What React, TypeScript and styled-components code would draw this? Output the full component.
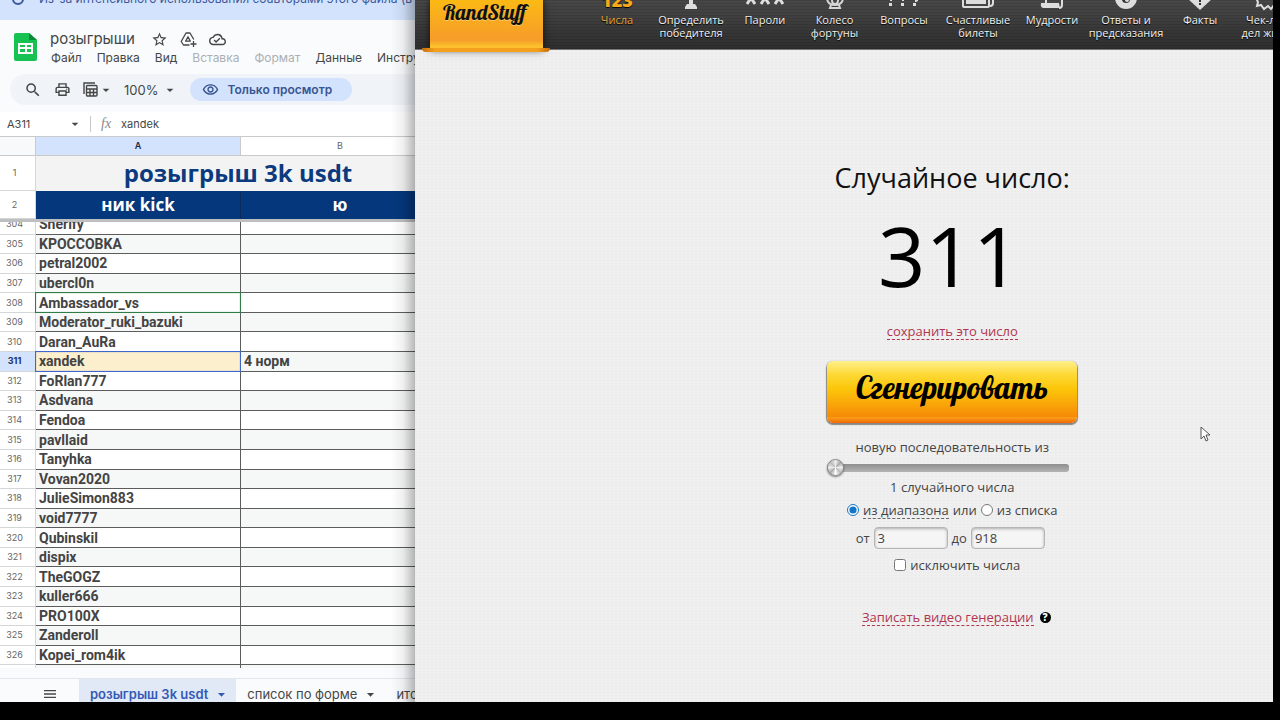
import React from 'react';
import styled, { createGlobalStyle, css } from 'styled-components';
import {
  MdArrowDropDown,
  MdMenu,
  MdOutlineCloudDone,
  MdOutlinePrint,
  MdOutlineRemoveRedEye,
  MdSearch,
  MdStarBorder,
} from 'react-icons/md';

const GlobalStyle = createGlobalStyle`
  * { box-sizing: border-box; }
  body { margin: 0; background: #000; }
  button, input { font: inherit; color: inherit; margin: 0; }
  button { border: 0; padding: 0; background: none; cursor: pointer; white-space: nowrap; }
`;

const sheetFont = `Inter, "Liberation Sans", sans-serif`;
const siteFont = `"Open Sans", "Noto Sans", sans-serif`;
const scriptFont = `Lobster, "Liberation Serif", serif`;

const Desktop = styled.div`
  display: grid;
  grid-template-columns: minmax(0, 415fr) minmax(0, 858fr);
  min-height: 100vh;
  padding: 0 7px 18px 0;
  background: #000;
`;

/* ---------- Spreadsheet ---------- */

const SheetPane = styled.section`
  position: relative;
  display: flex;
  flex-direction: column;
  overflow: hidden;
  background: #f9fbfd;
  color: #444746;
  font-family: ${sheetFont};
  &::after {
    content: '';
    position: absolute;
    inset: 0 0 0 auto;
    width: 24px;
    background: linear-gradient(to right, rgba(0, 0, 0, 0), rgba(0, 0, 0, 0.06) 50%, rgba(0, 0, 0, 0.28));
    pointer-events: none;
  }
`;

const Notice = styled.div`
  display: flex;
  align-items: flex-end;
  gap: 14px;
  height: 20px;
  padding: 0 0 14px 12px;
  overflow: hidden;
  background: #d3e3fd;
  color: #3c5a9a;
  font-size: 12px;
  line-height: 14px;
  white-space: nowrap;
  svg { flex: none; }
`;

const DocHeader = styled.header`
  display: flex;
  gap: 13px;
  height: 54px;
  padding: 9px 0 0 14px;
`;

const SheetsLogo = styled.svg`
  flex: none;
  width: 23px;
  height: 28px;
  margin-top: 4px;
`;

const DocInfo = styled.div`
  display: flex;
  flex-direction: column;
  min-width: 0;
`;

const TitleRow = styled.div`
  display: flex;
  align-items: center;
  height: 20px;
  gap: 12px;
`;

const DocTitle = styled.h1`
  margin: 0 4px 0 0;
  font-size: 15px;
  font-weight: 400;
  line-height: 20px;
`;

const IconButton = styled.button`
  display: flex;
  align-items: center;
  justify-content: center;
  color: #444746;
`;

const MenuBar = styled.nav`
  display: flex;
  gap: 15px;
  padding: 0 0 0 1px;
`;

const MenuItem = styled.button<{ $off?: boolean }>`
  font-size: 12px;
  line-height: 18px;
  color: ${(p) => (p.$off ? '#adb0b3' : '#444746')};
`;

const Toolbar = styled.div`
  display: flex;
  align-items: center;
  height: 31px;
  margin-left: 10px;
  padding-left: 14px;
  border-radius: 16px 0 0 16px;
  background: #f0f4f9;
`;

const ToolGroup = styled.div`
  display: flex;
  align-items: center;
  margin-left: 12px;
`;

const ZoomButton = styled(IconButton)`
  gap: 4px;
  margin-left: 10px;
  font-size: 13px;
`;

const ViewOnly = styled.button`
  display: flex;
  align-items: center;
  gap: 8px;
  height: 23px;
  margin: 0 0 1px 12px;
  padding: 0 20px 0 12px;
  border-radius: 12px;
  background: #d3e3fd;
  color: #3a5590;
  font-size: 12px;
  font-weight: 600;
`;

const FormulaBar = styled.div`
  display: flex;
  align-items: center;
  height: 24px;
  margin-top: 7px;
  background: #fff;
  font-size: 11px;
`;

const NameBox = styled.input`
  width: 67px;
  padding: 0 0 0 7px;
  border: 0;
  background: none;
  outline: 0;
`;

const FormulaMark = styled.span`
  margin-left: 7px;
  padding-left: 10px;
  border-left: 1px solid #c7c7c7;
  color: #888;
  font: italic 14px "Liberation Serif", serif;
`;

const FormulaInput = styled.input`
  flex: 1;
  min-width: 0;
  margin-left: 10px;
  padding: 0;
  border: 0;
  background: none;
  outline: 0;
`;

const GridTable = styled.table`
  flex: none;
  width: 440px;
  table-layout: fixed;
  border-collapse: separate;
  border-spacing: 0;
  background: #fff;
`;

const Corner = styled.th`
  height: 20px;
  padding: 0;
  border: solid #c8cacc;
  border-width: 1px 1px 1px 0;
  background: #f8f9fa;
`;

const ColumnHead = styled.th<{ $active?: boolean }>`
  height: 20px;
  padding: 0 0 2px;
  border: solid #c8cacc;
  border-width: 1px 1px 1px 0;
  background: ${(p) => (p.$active ? '#d3e3fd' : '#fff')};
  color: ${(p) => (p.$active ? '#1f2a44' : '#666')};
  font-size: 9px;
  font-weight: ${(p) => (p.$active ? 600 : 400)};
`;

const RowHead = styled.th<{ $active?: boolean }>`
  padding: 0 6px 0 0;
  border: solid #d4d6d8;
  border-width: 0 1px 1px 0;
  background: ${(p) => (p.$active ? '#d3e3fd' : '#fff')};
  color: ${(p) => (p.$active ? '#1d3468' : '#666')};
  font-size: 9px;
  font-weight: ${(p) => (p.$active ? 700 : 400)};
  line-height: 12px;
`;

const BannerCell = styled.td`
  height: 35px;
  padding: 0 0 2px;
  background: #f3f3f3;
  color: #0b3a7e;
  font: 700 24px/30px "Open Sans", sans-serif;
  text-align: center;
`;

const FieldCell = styled.td`
  height: 28px;
  padding: 0;
  border-right: 1px solid #0a2a5c;
  background: #04377c;
  color: #fff;
  font: 700 17px/22px "Open Sans", sans-serif;
  text-align: center;
`;

const FreezeLine = styled.div`
  flex: none;
  height: 3px;
  background: #bdbfc1;
`;

const ScrollArea = styled.div`
  flex: 1 1 446px;
  min-height: 0;
  overflow: hidden;
`;

const BodyTable = styled(GridTable)`
  height: 470px;
  margin-top: -7px;
  tr:nth-child(even) td { background: #f6f8f8; }
`;

const marks = { selected: '#3f66cc', other: '#2f7d45' };

const Cell = styled.td<{ $mark?: keyof typeof marks }>`
  position: relative;
  height: 19px;
  padding: 0 0 0 3px;
  border: solid #5c5c5c;
  border-width: 0 1px 1px 0;
  color: #444;
  font: 700 14px/16px Roboto, sans-serif;
  ${(p) => p.$mark && css`
    &::before {
      content: '';
      position: absolute;
      z-index: 1;
      inset: -1px;
      border: 1px solid ${marks[p.$mark]};
      box-shadow: inset 0 0 1px ${marks[p.$mark]};
    }
  `}
  tr &&& { ${(p) => p.$mark === 'selected' && 'background: #fcefcd;'} }
`;

const TabBar = styled.div`
  display: flex;
  flex: none;
  height: 24px;
  margin-top: 10px;
  border-top: 1px solid #e3e6ea;
  padding-left: 42px;
  overflow: hidden;
  ${IconButton} { margin: 7px 21px 0 0; height: 16px; }
`;

const SheetTab = styled.button<{ $active?: boolean }>`
  display: flex;
  align-items: flex-start;
  gap: 5px;
  padding: 7px 6px 0 11px;
  background: ${(p) => (p.$active ? '#e1e9f7' : 'transparent')};
  color: ${(p) => (p.$active ? '#3459b5' : '#444746')};
  font-size: 13px;
  font-weight: ${(p) => (p.$active ? 600 : 400)};
  line-height: 16px;
`;

/* ---------- RandStuff site ---------- */

const SitePane = styled.section`
  overflow: hidden;
  background-color: #eee;
  background-image: linear-gradient(45deg, rgba(0, 0, 0, 0.02) 25%, transparent 25% 60%, rgba(255, 255, 255, 0.15) 60%);
  background-size: 4px 3px;
  color: #444;
  font-family: ${siteFont};
`;

const Page = styled.div`
  width: 125%;
`;

const SiteHeader = styled.header`
  display: flex;
  height: 50px;
  padding-left: 15px;
  border-bottom: 1px solid #777;
  background: repeating-linear-gradient(to bottom, rgba(0, 0, 0, 0.1) 0 1px, transparent 1px 3px),
    linear-gradient(#484848, #2e2e2e);
`;

const Brand = styled.a`
  position: relative;
  flex: none;
  width: 113px;
  height: 50px;
  padding-right: 4px;
  background: linear-gradient(#fbb914, #f69c2a 80%, #fbc02c 92%);
  color: #111;
  font: 400 21px/25px ${scriptFont};
  text-align: center;
  text-decoration: none;
  text-shadow: 0 1px 0 rgba(255, 255, 255, 0.35);
  box-shadow: 0 0 8px rgba(0, 0, 0, 0.7);
  &::after {
    content: '';
    position: absolute;
    left: -8px;
    right: -7px;
    bottom: -2px;
    height: 4px;
    border-radius: 0 0 8px 8px;
    background: linear-gradient(to right, #c96a08, #f3a01c 10% 90%, #c96a08);
  }
`;

const SiteNav = styled.nav`
  display: flex;
  margin-left: 37px;
`;

const NavLink = styled.a<{ $current?: boolean; $narrow?: boolean }>`
  display: flex;
  flex: none;
  flex-direction: column;
  align-items: center;
  width: ${(p) => (p.$narrow ? 65 : 74)}px;
  color: ${(p) => (p.$current ? '#e0a53a' : '#f0f0f0')};
  font-size: 11px;
  font-weight: 500;
  line-height: 13px;
  text-align: center;
  text-decoration: none;
  white-space: nowrap;
  text-shadow: 0 1px 1px #000;
  svg { display: block; flex: none; width: 48px; height: 13px; overflow: hidden; }
`;

const NumbersGlyph = styled.span`
  display: flex;
  align-items: flex-end;
  height: 13px;
  padding-bottom: 3px;
  overflow: hidden;
  color: #f9a81c;
  font: 800 18px/20px ${siteFont};
`;

const Generator = styled.main`
  display: flex;
  flex-direction: column;
  align-items: center;
  padding: 110px 0 0 2px;
  font-size: 13px;
  line-height: 18px;
`;

const Heading = styled.h2`
  margin: 0;
  color: #111;
  font-size: 27px;
  font-weight: 400;
  line-height: 36px;
`;

const Result = styled.output`
  margin: 0 6px 9px 0;
  color: #000;
  font-size: 83px;
  line-height: 118px;
`;

const DashedLink = styled.a`
  border-bottom: 1px dashed currentColor;
  color: #b03650;
  line-height: 16px;
  text-decoration: none;
`;

const GenerateButton = styled.button`
  width: 250px;
  height: 62px;
  margin: 21px 0 15px;
  padding-bottom: 8px;
  border-radius: 6px;
  background: linear-gradient(#fff08c, #fdd835 22%, #fcc60a 45%, #f99a08 78%, #f58a06 90%, #fb9d18 91%, #f06a08);
  box-shadow: 0 1px 1px 1px #8a8580;
  color: #000;
  font: 400 31px/40px ${scriptFont};
`;

const Slider = styled.input`
  width: 242px;
  height: 18px;
  margin: 3px 8px 1px 0;
  appearance: none;
  background: none;
  &::-webkit-slider-runnable-track {
    height: 8px;
    border-radius: 3px;
    background: linear-gradient(#8e8e8e, #b4b4b4);
  }
  &::-webkit-slider-thumb {
    appearance: none;
    width: 17px;
    height: 17px;
    margin-top: -5px;
    border: 1px solid #888;
    border-radius: 50%;
    background: conic-gradient(#eee, #aaa, #eee, #bbb, #fff, #aaa, #eee, #bbb, #eee);
    box-shadow: 0 1px 2px rgba(0, 0, 0, 0.5);
  }
`;

const FieldRow = styled.div<{ $indent?: boolean }>`
  display: flex;
  align-items: center;
  gap: 4px;
  margin-top: ${(p) => (p.$indent ? 8 : 5)}px;
  padding-left: ${(p) => (p.$indent ? 10 : 0)}px;
`;

const RangeRow = styled(FieldRow)`
  margin-top: 8px;
  padding-right: 4px;
`;

const Choice = styled.label`
  display: flex;
  align-items: center;
  gap: 4px;
`;

const Tick = styled.input`
  width: 12px;
  height: 12px;
  accent-color: #1375c8;
`;

const ChoiceText = styled.span<{ $dashed?: boolean }>`
  border-bottom: ${(p) => (p.$dashed ? '1px dashed #666' : 0)};
  line-height: 16px;
`;

const NumberField = styled.input`
  width: 74px;
  height: 22px;
  padding: 0 3px;
  border: 1px solid #b5b5b5;
  border-radius: 4px;
  background: #f5f5f5;
  box-shadow: inset 0 1px 3px rgba(0, 0, 0, 0.3);
`;

const VideoRow = styled.div`
  display: flex;
  align-items: center;
  gap: 6px;
  margin-top: 36px;
  padding-left: 8px;
`;

const HelpBadge = styled.button`
  width: 11px;
  height: 11px;
  border-radius: 50%;
  background: #000;
  color: #fff;
  font-size: 10px;
  font-weight: 800;
  line-height: 11px;
`;

const Pointer = styled.svg`
  position: fixed;
  left: 1200px;
  top: 426px;
  width: 12px;
  height: 17px;
`;

/* Only the lower edge of each navigation icon reaches into the visible header. */
const icons: Record<string, React.ReactNode> = {
  cup: <path d="M22 0h4v4h2l2 3v2H18V7l2-3h2z" />,
  stars: (
    <g stroke="#ddd" strokeWidth="3">
      <path d="M10-2L6 4M10-2l4 6M24-2l-4 6M24-2l4 6M38-2l-4 6M38-2l4 6" fill="none" />
    </g>
  ),
  wheel: (
    <g fill="none" stroke="#d5d5d5" strokeWidth="2">
      <path d="M16 -1c1 5 4 6 8 6s7-1 8-6M21 0c0 3 1 4 3 4s3-1 3-4" />
      <path d="M20 5l-1 3h10l-1-3" />
    </g>
  ),
  marks: <path d="M9 3h3v3H9zM21 3h3v3h-3zM33 3h3v3h-3zM10 0h2v1h-2zM22 0h2v1h-2zM35 0h3v1l-2 1h-1z" />,
  tickets: (
    <g fill="none" stroke="#ddd" strokeWidth="2">
      <path d="M9 -2v8q0 1 2 1h22q2 0 2-1v-8" />
      <path d="M36 6q3 0 3-3v-5" />
      <path d="M13 -2v5h18v-5z" fill="#ddd" />
    </g>
  ),
  scroll: (
    <g>
      <path d="M13 3h18l1 5H16q-4 0-3-5z" fill="#ddd" />
      <path d="M18 -1v4M34 -1v6q0 3-3 3" fill="none" stroke="#ddd" strokeWidth="2" />
    </g>
  ),
  eye: (
    <g>
      <circle cx="24" cy="-2" r="11" fill="#ddd" />
      <circle cx="24" cy="-1" r="4" fill="#333" />
      <circle cx="25" cy="0" r="2" fill="#ddd" />
    </g>
  ),
  sign: (
    <g>
      <path d="M11-2h26L24 10z" fill="#ddd" />
      <path d="M23-2h2v4h-2zM23 3h2v2h-2z" fill="#333" />
    </g>
  ),
  badge: <path d="M10 -2l2 4-1 4 4-1 3 4 4-3 3 3 3-4 4 1v-4" fill="none" stroke="#ddd" strokeWidth="2" />,
};

const navItems: { lines: string[]; icon?: string; narrow?: boolean }[] = [
  { lines: ['Числа'] },
  { lines: ['Определить', 'победителя'], icon: 'cup' },
  { lines: ['Пароли'], icon: 'stars' },
  { lines: ['Колесо', 'фортуны'], icon: 'wheel', narrow: true },
  { lines: ['Вопросы'], icon: 'marks' },
  { lines: ['Счастливые', 'билеты'], icon: 'tickets' },
  { lines: ['Мудрости'], icon: 'scroll' },
  { lines: ['Ответы и', 'предсказания'], icon: 'eye' },
  { lines: ['Факты'], icon: 'sign' },
  { lines: ['Чек-лист', 'дел жизни'], icon: 'badge', narrow: true },
];

const menuItems = [
  { text: 'Файл' },
  { text: 'Правка' },
  { text: 'Вид' },
  { text: 'Вставка', off: true },
  { text: 'Формат', off: true },
  { text: 'Данные' },
  { text: 'Инструменты' },
];

const names = [
  'Sherify', 'KPOCCOBKA', 'petral2002', 'ubercl0n', 'Ambassador_vs', 'Moderator_ruki_bazuki',
  'Daran_AuRa', 'xandek', 'FoRlan777', 'Asdvana', 'Fendoa', 'pavllaid', 'Tanyhka', 'Vovan2020',
  'JulieSimon883', 'void7777', 'Qubinskil', 'dispix', 'TheGOGZ', 'kuller666', 'PRO100X',
  'Zanderoll', 'Kopei_rom4ik', '',
];
const firstRow = 304;
const selectedRow = 311;
const otherUserRow = 308;

const HeadCol = styled.col`
  width: 36px;
`;
const NameCol = styled.col`
  width: 205px;
`;

const Columns = () => (
  <colgroup>
    <HeadCol />
    <NameCol />
    <col />
  </colgroup>
);

function Spreadsheet() {
  return (
    <SheetPane>
      <Notice>
        <svg width="13" height="13" viewBox="0 0 13 13" fill="none" stroke="currentColor" strokeWidth="2">
          <circle cx="6" cy="6" r="5" />
        </svg>
        Из-за интенсивного использования соавторами этого файла (в
      </Notice>
      <DocHeader>
        <SheetsLogo viewBox="0 0 23 28">
          <path d="M2 0h13l8 7v19q0 2-2 2H2q-2 0-2-2V2Q0 0 2 0z" fill="#17c252" />
          <path d="M15 0l8 7h-8z" fill="#0b8a3a" />
          <path d="M4 10h15v11H4zM6 12v2h5v-2zM13 12v2h4v-2zM6 16v3h5v-3zM13 16v3h4v-3z" fill="#fff" fillRule="evenodd" />
        </SheetsLogo>
        <DocInfo>
          <TitleRow>
            <DocTitle>розыгрыши</DocTitle>
            <IconButton aria-label="Отметить"><MdStarBorder size={17} /></IconButton>
            <IconButton aria-label="Добавить на Диск">
              <svg width="17" height="17" viewBox="0 0 17 17" fill="none" stroke="currentColor" strokeWidth="1.3">
                <path d="M9.5 14h-6L1.2 10.500 6 2h4l3.800 6.500" strokeLinejoin="round" />
                <path d="M8 5.800l2.300 4.400H5.600z" strokeLinejoin="round" />
                <path d="M13.500 10v6M10.500 13h6" />
              </svg>
            </IconButton>
            <IconButton aria-label="Сохранено"><MdOutlineCloudDone size={17} /></IconButton>
          </TitleRow>
          <MenuBar>
            {menuItems.map((m) => (
              <MenuItem key={m.text} $off={m.off}>{m.text}</MenuItem>
            ))}
          </MenuBar>
        </DocInfo>
      </DocHeader>
      <Toolbar>
        <IconButton aria-label="Поиск"><MdSearch size={18} /></IconButton>
        <ToolGroup>
          <IconButton aria-label="Печать"><MdOutlinePrint size={17} /></IconButton>
        </ToolGroup>
        <ToolGroup>
          <IconButton aria-label="Фильтр">
            <svg width="15" height="15" viewBox="0 0 15 15" fill="none" stroke="currentColor" strokeWidth="1.4">
              <path d="M1 12V1h11" />
              <rect x="3.5" y="3.5" width="10.5" height="10.5" rx="1" />
              <path d="M3.500 7h10.500M3.500 10.500h10.500M7 7v7M10.500 7v7" />
            </svg>
            <MdArrowDropDown size={16} />
          </IconButton>
        </ToolGroup>
        <ZoomButton aria-label="Масштаб">
          100%
          <MdArrowDropDown size={16} />
        </ZoomButton>
        <ViewOnly>
          <MdOutlineRemoveRedEye size={17} />
          Только просмотр
        </ViewOnly>
      </Toolbar>
      <FormulaBar>
        <NameBox aria-label="Имя ячейки" defaultValue="A311" />
        <MdArrowDropDown size={16} />
        <FormulaMark>fx</FormulaMark>
        <FormulaInput aria-label="Формула" defaultValue="xandek" />
      </FormulaBar>
      <GridTable>
        <Columns />
        <thead>
          <tr>
            <Corner />
            <ColumnHead $active>A</ColumnHead>
            <ColumnHead>B</ColumnHead>
          </tr>
        </thead>
        <tbody>
          <tr>
            <RowHead>1</RowHead>
            <BannerCell colSpan={2}>розыгрыш 3k usdt</BannerCell>
          </tr>
          <tr>
            <RowHead>2</RowHead>
            <FieldCell>ник kick</FieldCell>
            <FieldCell>ю</FieldCell>
          </tr>
        </tbody>
      </GridTable>
      <FreezeLine />
      <ScrollArea>
        <BodyTable>
          <Columns />
          <tbody>
            {names.map((name, i) => {
              const row = firstRow + i;
              const mark = row === selectedRow ? 'selected' : row === otherUserRow ? 'other' : undefined;
              return (
                <tr key={row}>
                  <RowHead $active={row === selectedRow}>{name ? row : ''}</RowHead>
                  <Cell $mark={mark}>{name}</Cell>
                  <Cell>{row === selectedRow ? '4 норм' : ''}</Cell>
                </tr>
              );
            })}
          </tbody>
        </BodyTable>
      </ScrollArea>
      <TabBar>
        <IconButton aria-label="Все листы"><MdMenu size={16} /></IconButton>
        <SheetTab $active>розыгрыш 3k usdt<MdArrowDropDown size={17} /></SheetTab>
        <SheetTab>список по форме<MdArrowDropDown size={17} /></SheetTab>
        <SheetTab>итоги</SheetTab>
      </TabBar>
    </SheetPane>
  );
}

function RandomSite() {
  return (
    <SitePane>
      <Page>
        <SiteHeader>
          <Brand href="#">RandStuff</Brand>
          <SiteNav>
            {navItems.map((item) => (
              <NavLink key={item.lines[0]} href="#" $current={!item.icon} $narrow={item.narrow}>
                {item.icon ? (
                  <svg viewBox="0 0 48 13" fill="#ddd">{icons[item.icon]}</svg>
                ) : (
                  <NumbersGlyph>123</NumbersGlyph>
                )}
                {item.lines.map((line) => (
                  <span key={line}>{line}</span>
                ))}
              </NavLink>
            ))}
          </SiteNav>
        </SiteHeader>
        <Generator>
          <Heading>Случайное число:</Heading>
          <Result>311</Result>
          <DashedLink href="#">сохранить это число</DashedLink>
          <GenerateButton>Сгенерировать</GenerateButton>
          <label htmlFor="count">новую последовательность из</label>
          <Slider id="count" type="range" min={1} max={100} defaultValue={1} />
          <span>1 случайного числа</span>
          <FieldRow>
            <Choice>
              <Tick type="radio" name="source" defaultChecked />
              <ChoiceText $dashed>из диапазона</ChoiceText>
            </Choice>
            или
            <Choice>
              <Tick type="radio" name="source" />
              <ChoiceText>из списка</ChoiceText>
            </Choice>
          </FieldRow>
          <RangeRow>
            <label htmlFor="from">от</label>
            <NumberField id="from" defaultValue="3" />
            <label htmlFor="to">до</label>
            <NumberField id="to" defaultValue="918" />
          </RangeRow>
          <FieldRow $indent>
            <Choice>
              <Tick type="checkbox" />
              <ChoiceText>исключить числа</ChoiceText>
            </Choice>
          </FieldRow>
          <VideoRow>
            <DashedLink href="#">Записать видео генерации</DashedLink>
            <HelpBadge>?</HelpBadge>
          </VideoRow>
        </Generator>
      </Page>
    </SitePane>
  );
}

export default function App() {
  return (
    <>
      <GlobalStyle />
      <Desktop>
        <Spreadsheet />
        <RandomSite />
      </Desktop>
      <Pointer viewBox="0 0 12 17">
        <path d="M1 1v12l3-3 2 5 2-1-2-5h4z" fill="#fff" stroke="#555" />
      </Pointer>
    </>
  );
}
